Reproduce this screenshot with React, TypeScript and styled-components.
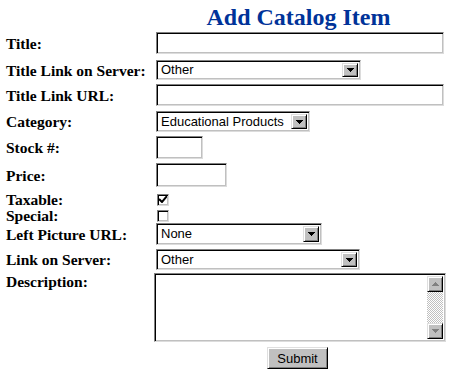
import React from "react";
import styled, { createGlobalStyle } from "styled-components";

const Global = createGlobalStyle`
  html, body { margin: 0; padding: 0; background: #ffffff; }
  body { font-family: "Liberation Serif", "Times New Roman", serif; }
`;

const Page = styled.div`
  width: 449px;
  height: 374px;
  padding: 0 0 0 6px;
  box-sizing: border-box;
  display: flex;
  flex-direction: column;
`;

const Row = styled.div<{ $mt: number; $h: number }>`
  display: grid;
  grid-template-columns: 150px 293px;
  align-items: center;
  margin-top: ${(p) => p.$mt}px;
  height: ${(p) => p.$h}px;
`;

const Heading = styled.h1`
  grid-column: 2;
  margin: 0;
  padding-right: 8px;
  text-align: center;
  font-family: "Liberation Serif", "Times New Roman", serif;
  font-weight: bold;
  font-size: 24px;
  line-height: 22px;
  color: #003399;
`;

const Label = styled.div<{ $top?: boolean }>`
  font-family: "Liberation Serif", "Times New Roman", serif;
  font-weight: bold;
  font-size: 15.5px;
  line-height: 14px;
  color: #000;
  white-space: nowrap;
  align-self: ${(p) => (p.$top ? "start" : "center")};
  margin-top: ${(p) => (p.$top ? "2px" : "1px")};
`;

const sunken = `
  box-sizing: border-box;
  background: #ffffff;
  border: 1px solid;
  border-color: #808080 #dcdcdc #dcdcdc #808080;
  box-shadow: inset 1px 1px 0 #000000, inset -1px -1px 0 #c0c0c0;
`;

const TextField = styled.div<{ $w: number; $h: number }>`
  ${sunken}
  width: ${(p) => p.$w}px;
  height: ${(p) => p.$h}px;
`;

const Select = styled.div<{ $w: number; $h: number }>`
  ${sunken}
  width: ${(p) => p.$w}px;
  height: ${(p) => p.$h}px;
  display: flex;
  align-items: stretch;
  padding: 2px;
`;

const SelectText = styled.span`
  flex: 1;
  font-family: "Liberation Sans", Arial, sans-serif;
  font-size: 13px;
  line-height: 14px;
  color: #000;
  padding-left: 2px;
  display: flex;
  align-items: center;
`;

const raised = `
  box-sizing: border-box;
  background: #c0c0c0;
  border: 1px solid;
  border-color: #dfdfdf #000000 #000000 #dfdfdf;
  box-shadow: inset 1px 1px 0 #ffffff, inset -1px -1px 0 #808080;
`;

const DropButton = styled.span`
  ${raised}
  width: 16px;
  display: flex;
  align-items: center;
  justify-content: center;
`;

const Arrow = styled.svg`
  display: block;
`;

const Check = styled.div`
  ${sunken}
  width: 12px;
  height: 12px;
  margin-left: 1px;
  display: flex;
  align-items: center;
  justify-content: center;
`;

const TextArea = styled.div`
  ${sunken}
  width: 292px;
  height: 69px;
  margin-left: -2px;
  padding: 2px;
  display: flex;
  justify-content: flex-end;
`;

const ScrollBar = styled.div`
  width: 16px;
  display: flex;
  flex-direction: column;
  justify-content: space-between;
  background: repeating-conic-gradient(#c0c0c0 0 25%, #ffffff 0 50%) 0 0 / 2px 2px;
`;

const ScrollButton = styled.span`
  ${raised}
  height: 16px;
  display: flex;
  align-items: center;
  justify-content: center;
`;

const ButtonRow = styled.div`
  display: flex;
  justify-content: center;
  padding-left: 140px;
  margin-top: 5px;
`;

const SubmitButton = styled.button`
  ${raised}
  width: 61px;
  height: 22px;
  padding: 0;
  font-family: "Liberation Sans", Arial, sans-serif;
  font-size: 13px;
  color: #000;
`;

const Down = ({ color = "#000" }: { color?: string }) => (
  <Arrow width="7" height="4" viewBox="0 0 7 4">
    <path d="M0 0h7L3.5 4z" fill={color} shapeRendering="crispEdges" />
  </Arrow>
);

const Up = ({ color = "#000" }: { color?: string }) => (
  <Arrow width="7" height="4" viewBox="0 0 7 4">
    <path d="M0 4h7L3.5 0z" fill={color} shapeRendering="crispEdges" />
  </Arrow>
);

const DropSelect = ({ w, h, text }: { w: number; h: number; text: string }) => (
  <Select $w={w} $h={h}>
    <SelectText>{text}</SelectText>
    <DropButton>
      <Down />
    </DropButton>
  </Select>
);

export default function App() {
  return (
    <>
      <Global />
      <Page>
        <Row $mt={6} $h={22}>
          <Heading>Add Catalog Item</Heading>
        </Row>
        <Row $mt={4} $h={22}>
          <Label>Title:</Label>
          <TextField $w={288} $h={22} />
        </Row>
        <Row $mt={6} $h={20}>
          <Label>Title Link on Server:</Label>
          <DropSelect w={205} h={20} text="Other" />
        </Row>
        <Row $mt={4} $h={22}>
          <Label>Title Link URL:</Label>
          <TextField $w={288} $h={22} />
        </Row>
        <Row $mt={5} $h={21}>
          <Label>Category:</Label>
          <DropSelect w={154} h={21} text="Educational Products" />
        </Row>
        <Row $mt={4} $h={23}>
          <Label>Stock #:</Label>
          <TextField $w={47} $h={23} />
        </Row>
        <Row $mt={4} $h={24}>
          <Label>Price:</Label>
          <TextField $w={71} $h={24} />
        </Row>
        <Row $mt={5} $h={14}>
          <Label>Taxable:</Label>
          <Check>
            <svg width="8" height="7" viewBox="0 0 8 7">
              <path d="M0 3l3 3 5-6" stroke="#000" strokeWidth="2" fill="none" />
            </svg>
          </Check>
        </Row>
        <Row $mt={2} $h={14}>
          <Label>Special:</Label>
          <Check />
        </Row>
        <Row $mt={1} $h={22}>
          <Label>Left Picture URL:</Label>
          <DropSelect w={166} h={22} text="None" />
        </Row>
        <Row $mt={4} $h={21}>
          <Label>Link on Server:</Label>
          <DropSelect w={204} h={21} text="Other" />
        </Row>
        <Row $mt={3} $h={69}>
          <Label $top>Description:</Label>
          <TextArea>
            <ScrollBar>
              <ScrollButton>
                <Up color="#808080" />
              </ScrollButton>
              <ScrollButton>
                <Down color="#808080" />
              </ScrollButton>
            </ScrollBar>
          </TextArea>
        </Row>
        <ButtonRow>
          <SubmitButton>Submit</SubmitButton>
        </ButtonRow>
      </Page>
    </>
  );
}
